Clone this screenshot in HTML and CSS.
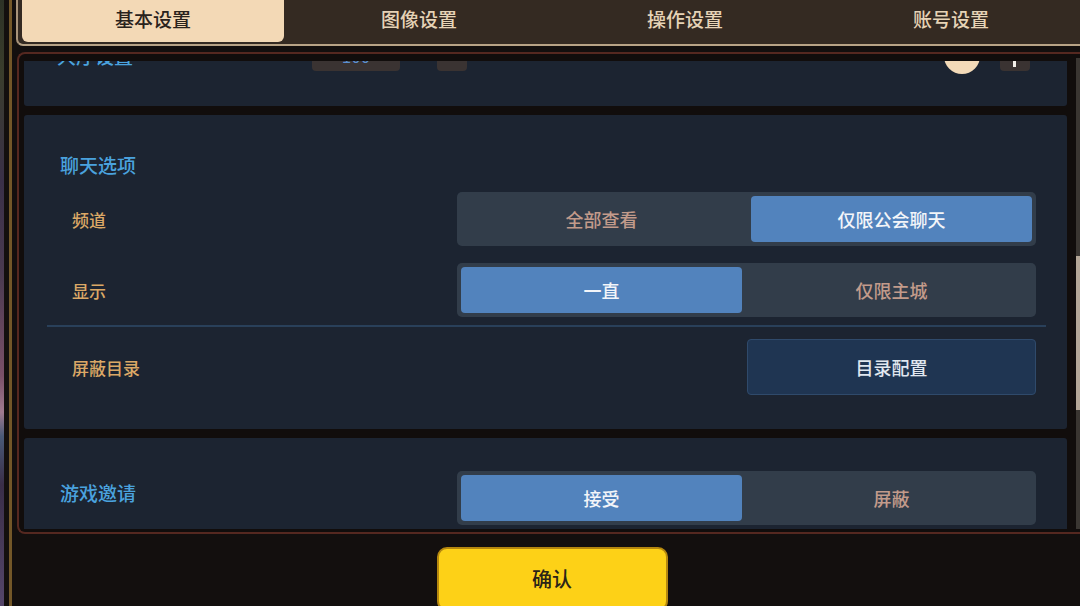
FILE: index.html
```html
<!DOCTYPE html>
<html lang="zh-CN">
<head>
<meta charset="utf-8">
<title>设置</title>
<link rel="stylesheet" href="styles.css">
</head>
<body>
<div class="app">
  <div class="scene"></div>
  <div class="rail"></div>
  <div class="main">
    <nav class="tabbar">
      <div class="tab active">基本设置</div>
      <div class="tab">图像设置</div>
      <div class="tab">操作设置</div>
      <div class="tab">账号设置</div>
    </nav>
    <section class="frame">
      <div class="viewport">
        <div class="list">
          <div class="card card-top">
            <div class="top-row">
              <div class="heading top-label">大厅设置</div>
              <div class="num-box">100</div>
              <div class="mini-box"><span class="minus"></span></div>
              <div class="spacer"></div>
              <div class="knob"></div>
              <div class="mini-box plus-box"><span class="plus-v"></span><span class="plus-h"></span></div>
            </div>
          </div>

          <div class="card card-chat">
            <div class="heading">聊天选项</div>
            <div class="row row-first">
              <div class="label">频道</div>
              <div class="seg">
                <div class="seg-item">全部查看</div>
                <div class="seg-item on">仅限公会聊天</div>
              </div>
            </div>
            <div class="row row-second">
              <div class="label">显示</div>
              <div class="seg">
                <div class="seg-item on">一直</div>
                <div class="seg-item">仅限主城</div>
              </div>
            </div>
            <div class="separator"></div>
            <div class="row row-third">
              <div class="label">屏蔽目录</div>
              <div class="action-wrap">
                <button class="action">目录配置</button>
              </div>
            </div>
          </div>

          <div class="card card-invite">
            <div class="row invite-row">
              <div class="heading invite-heading">游戏邀请</div>
              <div class="seg">
                <div class="seg-item on">接受</div>
                <div class="seg-item">屏蔽</div>
              </div>
            </div>
          </div>
        </div>
      </div>
      <div class="scrollbar"><div class="thumb"></div></div>
    </section>
    <footer class="footer">
      <button class="confirm">确认</button>
    </footer>
  </div>
</div>
</body>
</html>
```

FILE: styles.css
```css
* {
  box-sizing: border-box;
}

html, body {
  margin: 0;
  padding: 0;
  background: #130f0e;
}

body {
  width: 1080px;
  height: 606px;
  overflow: hidden;
  font-family: "Noto Sans CJK SC", "Noto Sans", sans-serif;
}

.app {
  display: flex;
  width: 1080px;
  height: 606px;
  overflow: hidden;
}

.scene {
  flex: none;
  width: 4px;
  height: 100%;
  background: linear-gradient(to bottom,
    #2d3226 0%, #3a3d2c 12%, #3a3048 30%, #4a3a50 45%,
    #7a5068 62%, #a07a90 68%, #4a5a78 72%, #3a2e48 80%, #55466a 100%);
}

.rail {
  flex: none;
  width: 12px;
  height: 100%;
  background: linear-gradient(to right,
    #130f0e 0, #130f0e 5px, #735728 5px, #735728 8px, #130f0e 8px);
}

.main {
  flex: none;
  width: 1072px;
  height: 606px;
  display: flex;
  flex-direction: column;
}

/* tabs */
.tabbar {
  flex: none;
  height: 46px;
  display: flex;
  padding: 0 2px;
  background: #342a22;
  border-left: 2px solid #a8937a;
  border-bottom: 2px solid #b8a386;
  border-bottom-left-radius: 7px;
}

.tab {
  flex: none;
  width: 266px;
  height: 42px;
  display: flex;
  align-items: center;
  justify-content: center;
  padding-bottom: 5px;
  font-size: 19px;
  font-weight: 500;
  color: #e6d3b6;
}

.tab.active {
  width: 262px;
  margin: 0 2px;
  background: #f3d9b6;
  color: #29221c;
  border-radius: 0 0 6px 6px;
}

/* frame */
.frame {
  flex: none;
  height: 482px;
  margin-top: 6px;
  margin-left: 1px;
  display: flex;
  padding: 7px 0 3px 5px;
  background: #110d0c;
  border: 2px solid #552820;
  border-right: none;
  border-radius: 8px 0 0 8px;
}

.viewport {
  flex: none;
  width: 1043px;
  height: 468px;
  overflow: hidden;
}

.list {
  display: flex;
  flex-direction: column;
  gap: 9px;
  margin-top: -35px;
}

.card {
  background: #1c2431;
  border-radius: 3px;
}

.heading {
  font-size: 19px;
  line-height: 26px;
  font-weight: 500;
  color: #4aa2de;
}

/* top (scrolled) card */
.card-top {
  height: 80px;
  padding: 12px 37px 0 33px;
}

.top-row {
  display: flex;
  align-items: center;
  height: 36px;
}

.top-label {
  flex: none;
  width: 255px;
}

.num-box {
  flex: none;
  width: 88px;
  height: 30px;
  border-radius: 4px;
  background: #3a3332;
  color: #5b8fcf;
  font-size: 17px;
  line-height: 30px;
  text-align: center;
}

.mini-box {
  flex: none;
  position: relative;
  width: 30px;
  height: 30px;
  margin-left: 37px;
  border-radius: 4px;
  background: #3a3332;
}

.minus {
  position: absolute;
  left: 9px;
  top: 14px;
  width: 12px;
  height: 3px;
  background: #f0ece6;
}

.spacer {
  flex: 1;
}

.knob {
  flex: none;
  width: 36px;
  height: 36px;
  border-radius: 50%;
  background: #f3dab8;
}

.plus-box {
  margin-left: 20px;
}

.plus-v {
  position: absolute;
  left: 13px;
  top: 4px;
  width: 3px;
  height: 22px;
  background: #f4f0ea;
}

.plus-h {
  position: absolute;
  left: 6px;
  top: 14px;
  width: 17px;
  height: 3px;
  background: #f4f0ea;
}

/* chat card */
.card-chat {
  height: 314px;
  padding: 37px 31px 34px 36px;
}

.row {
  display: flex;
  align-items: center;
  justify-content: space-between;
  padding-left: 12px;
}

.row-first {
  margin-top: 14px;
}

.row-second {
  margin-top: 17px;
}

.row-third {
  margin-top: 12px;
}

.label {
  font-size: 17px;
  font-weight: 500;
  color: #dba866;
}

.seg {
  flex: none;
  width: 579px;
  height: 54px;
  padding: 4px;
  display: grid;
  grid-template-columns: 1fr 1fr;
  gap: 9px;
  background: #323d4a;
  border-radius: 5px;
}

.seg-item {
  display: flex;
  align-items: center;
  justify-content: center;
  font-size: 18px;
  font-weight: 500;
  color: #c29b8b;
  border-radius: 4px;
}

.seg-item.on {
  background: #5283bd;
  color: #f3f5f9;
}

.separator {
  height: 2px;
  margin: 8px -10px 0 -13px;
  background: #29405a;
}

.action-wrap {
  flex: none;
  width: 579px;
  display: flex;
  justify-content: flex-end;
}

.action {
  width: 289px;
  height: 56px;
  background: #1f3552;
  border: 1.5px solid #2f4a6b;
  border-radius: 4px;
  font-family: inherit;
  font-size: 18px;
  font-weight: 500;
  color: #e0e7ef;
}

/* invite card */
.card-invite {
  height: 121px;
  padding: 33px 31px 34px 36px;
}

.invite-row {
  padding-left: 0;
}

.invite-heading {
  margin-bottom: 10px;
}

/* scrollbar */
.scrollbar {
  flex: none;
  width: 6px;
  margin-left: 9px;
  margin-top: -3px;
  height: 471px;
  background: #3a3632;
}

.thumb {
  margin-top: 198px;
  height: 154px;
  background: #b4a697;
}

/* footer */
.footer {
  flex: 1;
  display: flex;
  justify-content: center;
  align-items: flex-start;
  padding-top: 13px;
}

.confirm {
  width: 231px;
  height: 64px;
  background: #fdd117;
  border: 2px solid #b5870f;
  border-radius: 10px;
  font-family: inherit;
  font-size: 20px;
  font-weight: 500;
  color: #2a2418;
  padding: 0 0 2px;
}
```
